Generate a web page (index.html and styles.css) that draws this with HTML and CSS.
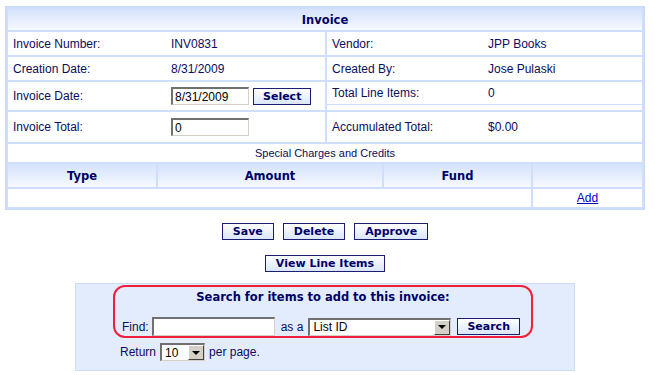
FILE: index.html
```html
<!DOCTYPE html>
<html lang="en">
<head>
    <meta charset="UTF-8">
    <meta name="viewport" content="width=device-width, initial-scale=1.0">
    <link rel="stylesheet" href="styles.css">
    <title>Invoice</title>
</head>
<body>
<div class="page">
    <table class="invoice">
        <colgroup>
            <col class="c1"><col class="c2"><col class="c3"><col class="c4"><col class="c5">
        </colgroup>
        <tr>
            <th colspan="5" class="title">Invoice</th>
        </tr>
        <tr class="r1">
            <td colspan="2"><div class="field"><span>Invoice Number:</span><span>INV0831</span></div></td>
            <td colspan="3"><div class="field right"><span>Vendor:</span><span>JPP Books</span></div></td>
        </tr>
        <tr class="r2">
            <td colspan="2"><div class="field"><span>Creation Date:</span><span>8/31/2009</span></div></td>
            <td colspan="3"><div class="field right"><span>Created By:</span><span>Jose Pulaski</span></div></td>
        </tr>
        <tr class="r3">
            <td colspan="2">
                <div class="field"><span>Invoice Date:</span>
                    <span class="inline"><input class="text" type="text" value="8/31/2009"><button class="btn">Select</button></span>
                </div>
            </td>
            <td colspan="3" class="split">
                <div class="field right top"><span>Total Line Items:</span><span>0</span></div>
            </td>
        </tr>
        <tr class="r4">
            <td colspan="2"><div class="field"><span>Invoice Total:</span><span><input class="text" type="text" value="0"></span></div></td>
            <td colspan="3"><div class="field right"><span>Accumulated Total:</span><span>$0.00</span></div></td>
        </tr>
        <tr class="special">
            <td colspan="5">Special Charges and Credits</td>
        </tr>
        <tr class="cols">
            <th>Type</th>
            <th colspan="2">Amount</th>
            <th>Fund</th>
            <th></th>
        </tr>
        <tr class="empty">
            <td colspan="4"></td>
            <td class="add"><a href="#">Add</a></td>
        </tr>
    </table>

    <div class="actions">
        <button class="btn">Save</button>
        <button class="btn">Delete</button>
        <button class="btn">Approve</button>
    </div>
    <div class="actions second">
        <button class="btn">View Line Items</button>
    </div>

    <div class="search">
        <div class="searchbox">
            <h4>Search for items to add to this invoice:</h4>
            <div class="findrow">
                <span>Find:</span>
                <input class="text find" type="text">
                <span>as a</span>
                <span class="combo wide">
                    <select><option>List ID</option></select>
                    <span class="drop"></span>
                </span>
                <button class="btn">Search</button>
            </div>
        </div>
        <div class="returnrow">
            <span>Return</span>
            <span class="combo small">
                <select><option>10</option></select>
                <span class="drop"></span>
            </span>
            <span>per page.</span>
        </div>
    </div>
</div>
</body>
</html>
```

FILE: styles.css
```css
*{
    box-sizing: border-box;
}

body{
    margin: 0;
    background: #fff;
    color: #0c0c5e;
    font-family: "Liberation Sans", Arial, sans-serif;
    font-size: 12px;
}

.page{
    width: 655px;
    padding: 6px 0 0 5px;
}

.invoice{
    width: 640px;
    table-layout: fixed;
    border-collapse: separate;
    border-spacing: 2px;
    background: #cfdefa;
    border: 1px solid #c9d9f7;
}

.c1{ width: 148px; }
.c2{ width: 167px; }
.c3{ width: 55px; }
.c4{ width: 147px; }
.c5{ width: 109px; }

.invoice td, .invoice th{
    background: #fff;
    padding: 0 5px;
    vertical-align: middle;
}

.invoice th{
    background: linear-gradient(#d4e2fb, #f6f9ff);
    color: #000066;
    font-family: "DejaVu Sans", Verdana, sans-serif;
    font-size: 11.5px;
    font-weight: bold;
    text-align: center;
}

.title{ height: 21px; }
.r1 td, .r2 td{ height: 23px; }
.r3 td{ height: 28px; }
.r4 td{ height: 30px; }

.field{
    display: grid;
    grid-template-columns: 158px 1fr;
    align-items: center;
}

.field.right{
    grid-template-columns: 156px 1fr;
}

.inline{
    display: flex;
    align-items: center;
    gap: 4px;
}

.split{
    vertical-align: top !important;
    padding: 0 !important;
}

.field.top{
    height: 23px;
    padding: 0 5px;
    border-bottom: 1px solid #cfdefa;
}

.text{
    width: 78px;
    height: 18px;
    padding: 0 2px;
    border-style: solid;
    border-width: 2px 1px 1px 2px;
    border-color: #707070 #d4d0c8 #d4d0c8 #707070;
    font-family: "Liberation Sans", Arial, sans-serif;
    font-size: 12px;
    color: #000;
    outline: none;
}

.btn{
    height: 17px;
    padding: 0 10px;
    border: 1px solid #1c1c70;
    background: linear-gradient(#ffffff, #d9e6fd);
    color: #000066;
    font-family: "DejaVu Sans", Verdana, sans-serif;
    font-size: 11px;
    font-weight: bold;
    line-height: 15px;
    cursor: pointer;
}

.r3 .btn{
    padding: 0 9px;
}

.special td{
    height: 18px;
    text-align: center;
    font-size: 11px;
}

.cols th{ height: 23px; }

.empty td{ height: 18px; }

.add{
    text-align: center;
}

.add a{
    color: #0000cc;
    font-size: 12px;
}

.actions{
    width: 640px;
    display: flex;
    justify-content: center;
    gap: 9px;
    margin-top: 13px;
}

.actions.second{
    margin-top: 15px;
}

.search{
    width: 500px;
    height: 88px;
    margin: 11px 0 0 70px;
    background: #e3ecfd;
    border: 1px solid #cddcf6;
    padding-top: 1px;
}

.searchbox{
    width: 420px;
    height: 53px;
    margin-left: 37px;
    border: 2px solid #f0203a;
    border-radius: 12px;
    padding: 3px 5px 0;
}

.searchbox h4{
    margin: 0;
    text-align: center;
    color: #000066;
    font-family: "DejaVu Sans", Verdana, sans-serif;
    font-size: 11.5px;
    line-height: 14px;
}

.findrow{
    display: flex;
    align-items: center;
    margin-top: 13px;
    padding-left: 2px;
}

.findrow .find{
    width: 123px;
    height: 19px;
    margin: 0 6px 0 3px;
}

.findrow .combo{
    margin: 0 6px 0 5px;
}

.findrow .btn{
    padding: 0 9px;
}

.combo{
    display: inline-flex;
    height: 18px;
    border-style: solid;
    border-width: 2px 1px 1px 2px;
    border-color: #707070 #d4d0c8 #d4d0c8 #707070;
    background: #fff;
}

.combo.wide{ width: 143px; }
.combo.small{ width: 45px; }

.combo select{
    appearance: none;
    -webkit-appearance: none;
    flex: 1;
    min-width: 0;
    border: none;
    outline: none;
    background: #fff;
    padding: 0 3px;
    font-family: "Liberation Sans", Arial, sans-serif;
    font-size: 12px;
    color: #000;
}

.drop{
    width: 16px;
    background: #d4d0c8;
    border-style: solid;
    border-width: 1px;
    border-color: #fff #404040 #404040 #fff;
    display: flex;
    align-items: center;
    justify-content: center;
}

.drop::after{
    content: "";
    border-left: 4px solid transparent;
    border-right: 4px solid transparent;
    border-top: 4px solid #000;
}

.returnrow{
    display: flex;
    align-items: center;
    gap: 4px;
    margin: 5px 0 0 44px;
}
```
